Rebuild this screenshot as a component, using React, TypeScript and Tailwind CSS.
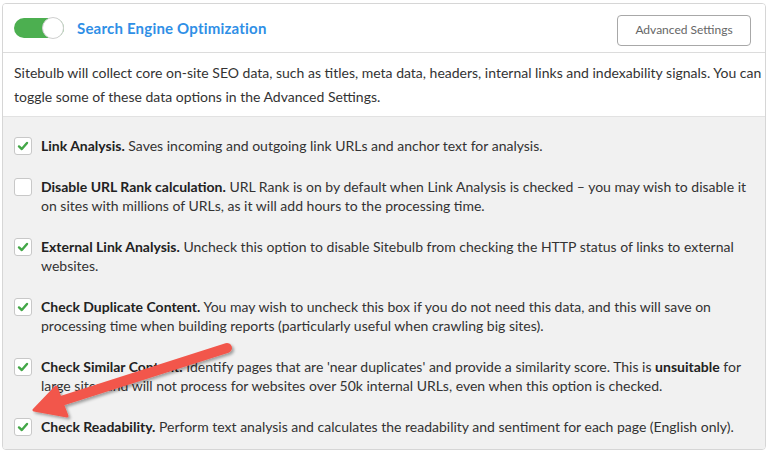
import React from 'react';

type Option = { id: string; label: string; text: React.ReactNode; checked: boolean };

const options: Option[] = [
    { id: 'link', label: 'Link Analysis.', checked: true, text: 'Saves incoming and outgoing link URLs and anchor text for analysis.' },
    { id: 'rank', label: 'Disable URL Rank calculation.', checked: false, text: 'URL Rank is on by default when Link Analysis is checked – you may wish to disable it on sites with millions of URLs, as it will add hours to the processing time.' },
    { id: 'external', label: 'External Link Analysis.', checked: true, text: 'Uncheck this option to disable Sitebulb from checking the HTTP status of links to external websites.' },
    { id: 'duplicate', label: 'Check Duplicate Content.', checked: true, text: 'You may wish to uncheck this box if you do not need this data, and this will save on processing time when building reports (particularly useful when crawling big sites).' },
    {
        id: 'similar',
        label: 'Check Similar Content.',
        checked: true,
        text: (
            <>
                Identify pages that are 'near duplicates' and provide a similarity score. This is <b className="font-bold text-[#222]">unsuitable</b> for large sites and will not process for websites over 50k internal URLs, even when this option is checked.
            </>
        ),
    },
    { id: 'readability', label: 'Check Readability.', checked: true, text: 'Perform text analysis and calculates the readability and sentiment for each page (English only).' },
];

const Checkbox = ({ checked }: { checked: boolean }) => (
    <div className="w-[18px] h-[18px] mt-px flex-shrink-0 rounded-[3px] border border-[#c8c8c8] bg-white flex items-center justify-center">
        {checked && (
            <svg width="12" height="12" viewBox="0 0 12 12" fill="none" stroke="#43a747" strokeWidth="2.4" strokeLinecap="round" strokeLinejoin="round">
                <path d="M2 6.4 L4.8 9 L10 3" />
            </svg>
        )}
    </div>
);

export default function App() {
    return (
        <div className="relative w-[768px] h-[452px] bg-white pt-[3px] pl-[2px]" style={{ fontFamily: 'Lato, "Open Sans", sans-serif' }}>
            <div className="w-[764px] h-[447px] rounded-[4px] border border-[#d6d6d6] overflow-hidden flex flex-col">
                <div className="h-[49px] flex items-center justify-between pl-[11px] pr-[14px] border-b border-[#dcdcdc] bg-white">
                    <div className="flex items-center gap-[13px]">
                        <div className="relative w-[50px] h-[20px] rounded-full bg-[#4caf50]">
                            <div className="absolute right-0 top-[-1px] w-[22px] h-[22px] rounded-full bg-white border border-[#d0d0d0]"></div>
                        </div>
                        <span className="text-[15px] font-bold text-[#2f8fe6] tracking-[0.2px]">Search Engine Optimization</span>
                    </div>
                    <button className="mt-[4px] h-[31px] w-[134px] rounded-[4px] border border-[#a8a8a8] text-[12px] text-[#666] bg-white">Advanced Settings</button>
                </div>
                <div className="bg-white pl-[11px] pr-[2px] pt-[8px] pb-[7px] text-[14px] leading-[24px] text-[#333] border-b border-[#e2e2e2]">
                    Sitebulb will collect core on-site SEO data, such as titles, meta data, headers, internal links and indexability signals. You can toggle some of these data options in the Advanced Settings.
                </div>
                <div className="flex-1 bg-[#f1f1f1] pl-[11px] pr-[8px] pt-[19px] flex flex-col gap-[22px]">
                    {options.map((o) => (
                        <div key={o.id} className="flex items-start gap-[9px]">
                            <Checkbox checked={o.checked} />
                            <p className="text-[14px] leading-[19px] text-[#333]">
                                <b className="font-bold text-[#222]">{o.label}</b> {o.text}
                            </p>
                        </div>
                    ))}
                </div>
            </div>
            <svg className="absolute left-0 top-0 pointer-events-none" width="768" height="452" viewBox="0 0 768 452">
                <defs>
                    <filter id="sh" x="-10%" y="-10%" width="120%" height="130%">
                        <feDropShadow dx="2" dy="2" stdDeviation="1.5" floodColor="#000" floodOpacity="0.35" />
                    </filter>
                </defs>
                <g filter="url(#sh)" fill="#f2574b" stroke="#f2574b">
                    <line x1="227" y1="348" x2="58" y2="402" strokeWidth="10" strokeLinecap="round" />
                    <polygon points="34,410 56,387 67,416" strokeWidth="3" strokeLinejoin="round" />
                </g>
            </svg>
        </div>
    );
}
